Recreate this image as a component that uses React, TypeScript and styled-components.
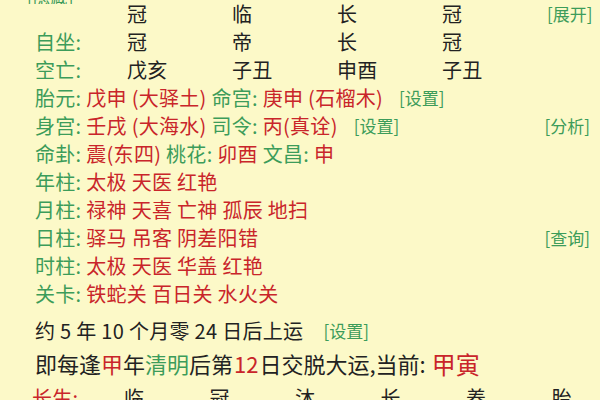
import styled, { createGlobalStyle } from "styled-components"

const GlobalStyle = createGlobalStyle`
  html, body {
    margin: 0;
    padding: 0;
    background: #fcf9c8;
  }
  body {
    font-family: "Noto Sans CJK SC", "Noto Sans", sans-serif;
    color: #222222;
  }
`

type Tone = "green" | "red" | "black"

const colors: Record<Tone, string> = {
  green: "#3c9c5a",
  red: "#c9252a",
  black: "#222222",
}

const topCells = ["冠", "临", "长", "冠"]
const ziZuo = ["冠", "帝", "长", "冠"]
const kongWang = ["戊亥", "子丑", "申酉", "子丑"]
const changSheng = ["临", "冠", "沐", "长", "养", "胎"]

const shenSha = [
  { label: "年柱", items: ["太极", "天医", "红艳"] },
  { label: "月柱", items: ["禄神", "天喜", "亡神", "孤辰", "地扫"] },
  { label: "日柱", items: ["驿马", "吊客", "阴差阳错"], link: "[查询]" },
  { label: "时柱", items: ["太极", "天医", "华盖", "红艳"] },
  { label: "关卡", items: ["铁蛇关", "百日关", "水火关"] },
]

const App = () => {
  return (
    <Page>
      <GlobalStyle />
      <TopCut>
        <CutText>[隐藏]</CutText>
      </TopCut>

      <CellRow $first>
        <span />
        {topCells.map((c, i) => (
          <Cell key={i}>{c}</Cell>
        ))}
        <EndLink>[展开]</EndLink>
      </CellRow>
      <CellRow>
        <Label>自坐:</Label>
        {ziZuo.map((c, i) => (
          <Cell key={i}>{c}</Cell>
        ))}
      </CellRow>
      <CellRow>
        <Label>空亡:</Label>
        {kongWang.map((c, i) => (
          <Cell key={i}>{c}</Cell>
        ))}
      </CellRow>

      <Row>
        <Label>胎元: </Label>
        <Text $tone="red">戊申 (大驿土) </Text>
        <Label>命宫: </Label>
        <Text $tone="red">庚申 (石榴木)</Text>
        <Link>[设置]</Link>
      </Row>
      <Row>
        <Label>身宫: </Label>
        <Text $tone="red">壬戌 (大海水) </Text>
        <Label>司令: </Label>
        <Text $tone="red">丙(真诠)</Text>
        <Link>[设置]</Link>
        <EndLink>[分析]</EndLink>
      </Row>
      <Row>
        <Label>命卦: </Label>
        <Text $tone="red">震(东四) </Text>
        <Label>桃花: </Label>
        <Text $tone="red">卯酉 </Text>
        <Label>文昌: </Label>
        <Text $tone="red">申</Text>
      </Row>

      {shenSha.map((r) => (
        <Row key={r.label}>
          <Label>{r.label}: </Label>
          <Text $tone="red">{r.items.join(" ")}</Text>
          {r.link && <EndLink>{r.link}</EndLink>}
        </Row>
      ))}

      <Row $gap={9}>
        <Text $tone="black">约 5 年 10 个月零 24 日后上运</Text>
        <Link $wide>[设置]</Link>
      </Row>
      <Row $gap={5} $size={22}>
        <Text $tone="black">
          即每逢<Text $tone="red">甲</Text>年<Text $tone="green">清明</Text>后第
          <Number>12</Number>日交脱大运,当前:
        </Text>
        <Big>甲寅</Big>
      </Row>

      <LifeRow>
        <Label $tone="red">长生:</Label>
        {changSheng.map((c, i) => (
          <Cell key={i}>{c}</Cell>
        ))}
      </LifeRow>
    </Page>
  )
}

export default App

const Page = styled.div`
  width: 600px;
  height: 400px;
  overflow: hidden;
  box-sizing: border-box;
  padding: 0 10px 0 35px;
  font-size: 20px;
  letter-spacing: 0.3px;
`

const TopCut = styled.div`
  height: 4px;
  overflow: hidden;
  margin-left: -8px;
`

const CutText = styled.div`
  font-size: 17px;
  line-height: 17px;
  margin-top: -13px;
  color: ${colors.green};
`

const CellRow = styled.div<{ $first?: boolean }>`
  display: grid;
  grid-template-columns: 92px repeat(4, 105px) minmax(0, 1fr);
  align-items: center;
  height: 28px;
  white-space: nowrap;
  margin-top: ${(p) => (p.$first ? "-5px" : "0")};
`

const LifeRow = styled.div`
  display: grid;
  grid-template-columns: 92px repeat(6, 85.5px);
  align-items: center;
  height: 28px;
  margin-top: 6px;
  margin-left: -3px;
`

const Cell = styled.span`
  color: ${colors.black};
`

const Row = styled.div<{ $gap?: number; $size?: number }>`
  display: flex;
  align-items: center;
  height: 28px;
  white-space: pre;
  margin-top: ${(p) => p.$gap ?? 0}px;
  font-size: ${(p) => p.$size ?? 20}px;
  letter-spacing: ${(p) => (p.$size ? "0" : "0.3px")};
`

const Label = styled.span<{ $tone?: Tone }>`
  color: ${(p) => colors[p.$tone ?? "green"]};
  white-space: pre;
`

const Text = styled.span<{ $tone: Tone }>`
  color: ${(p) => colors[p.$tone]};
  white-space: pre;
`

const Number = styled.span`
  color: ${colors.red};
  margin: 0 1px;
`

const Link = styled.span<{ $wide?: boolean }>`
  color: ${colors.green};
  font-size: 17px;
  letter-spacing: 0;
  margin-left: ${(p) => (p.$wide ? "20px" : "16px")};
`

const EndLink = styled.span`
  color: ${colors.green};
  font-size: 17px;
  letter-spacing: 0;
  margin-left: auto;
  justify-self: end;
  white-space: nowrap;
`

const Big = styled.span`
  color: ${colors.red};
  font-size: 24px;
  margin-left: 6px;
`
